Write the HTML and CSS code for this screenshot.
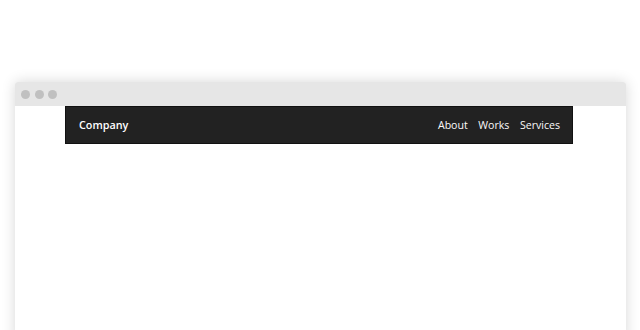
FILE: index.html
```html
<!DOCTYPE html>
<html>
<head>
<meta charset="utf-8">
<link rel="stylesheet" href="styles.css">
</head>
<body>
<div class="stage">
  <div class="window">
    <div class="titlebar">
      <span class="dot"></span><span class="dot"></span><span class="dot"></span>
    </div>
    <div class="content">
      <nav class="navbar">
        <span class="brand">Company</span>
        <ul class="links">
          <li>About</li>
          <li>Works</li>
          <li>Services</li>
        </ul>
      </nav>
    </div>
  </div>
</div>
</body>
</html>
```
FILE: styles.css
```css
html, body {
  margin: 0;
  padding: 0;
  background: #fff;
  overflow: hidden;
}
.stage {
  width: 640px;
  height: 330px;
  padding: 82px 14px 0 15px;
  box-sizing: border-box;
}
.window {
  height: 260px;
  background: #fff;
  border-radius: 3px 3px 0 0;
  box-shadow: 0 0 14px rgba(0, 0, 0, 0.16);
  display: flex;
  flex-direction: column;
}
.titlebar {
  height: 24px;
  background: #e6e6e6;
  border-radius: 3px 3px 0 0;
  display: flex;
  align-items: center;
  gap: 4.5px;
  padding-left: 6px;
}
.dot {
  width: 9px;
  height: 9px;
  border-radius: 50%;
  background: #c0c0c0;
}
.content {
  padding: 0 53px 0 50px;
}
.navbar {
  background: #222;
  border: 1px solid #111;
  display: flex;
  align-items: center;
  justify-content: space-between;
  padding: 0 12px 1px 13px;
  box-sizing: border-box;
  height: 38px;
  font-family: "Open Sans", sans-serif;
  font-size: 11px;
  color: #fff;
}
.brand {
  font-weight: 600;
  font-size: 10.8px;
}
.links {
  list-style: none;
  margin: 0;
  padding: 0;
  display: flex;
  gap: 10.5px;
  font-size: 10.6px;
  color: #fafafa;
}
```
